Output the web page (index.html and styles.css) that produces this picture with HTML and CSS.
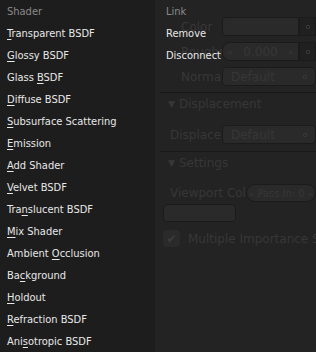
FILE: index.html
```html
<!DOCTYPE html>
<html lang="en">
<head>
    <meta charset="UTF-8">
    <title>Add Shader Menu</title>
    <link rel="stylesheet" href="styles.css">
</head>
<body>
    <div class="panel">
        <div class="node-inputs">
            <div class="prop-row">
                <span class="prop-label">Color</span>
                <div class="field swatch-field"></div>
                <div class="socket-btn"><i></i></div>
            </div>
            <div class="prop-row">
                <span class="prop-label">Roughness</span>
                <div class="field num-field"><span class="arrow">&#9664;</span><span>0.000</span><span class="arrow">&#9654;</span></div>
                <div class="socket-btn"><i></i></div>
            </div>
            <div class="prop-row">
                <span class="prop-label">Normal</span>
                <div class="field text-field"><span>Default</span><i class="dot"></i></div>
            </div>
        </div>

        <div class="section-head"><span class="tri">&#9660;</span> Displacement</div>
        <div class="prop-row indent">
            <span class="prop-label">Displacement</span>
            <div class="field text-field"><span>Default</span><i class="dot"></i></div>
        </div>

        <div class="section-head"><span class="tri">&#9660;</span> Settings</div>
        <div class="prop-row indent wide-label">
            <span class="prop-label">Viewport Color</span>
            <div class="field pill-field"><span class="arrow">&#9664;</span><span>Pass In: 0</span><span class="arrow">&#9654;</span></div>
        </div>
        <div class="field color-swatch"></div>
        <div class="check-row">
            <span class="checkbox">&#10004;</span>
            <span>Multiple Importance Sample</span>
        </div>
    </div>

    <div class="menu">
        <div class="menu-col shader-col">
            <div class="menu-title">Shader</div>
            <div class="menu-item"><u>T</u>ransparent BSDF</div>
            <div class="menu-item"><u>G</u>lossy BSDF</div>
            <div class="menu-item">Glass <u>B</u>SDF</div>
            <div class="menu-item"><u>D</u>iffuse BSDF</div>
            <div class="menu-item"><u>S</u>ubsurface Scattering</div>
            <div class="menu-item"><u>E</u>mission</div>
            <div class="menu-item"><u>A</u>dd Shader</div>
            <div class="menu-item"><u>V</u>elvet BSDF</div>
            <div class="menu-item">Tra<u>n</u>slucent BSDF</div>
            <div class="menu-item"><u>M</u>ix Shader</div>
            <div class="menu-item">Ambient <u>O</u>cclusion</div>
            <div class="menu-item">Ba<u>c</u>kground</div>
            <div class="menu-item"><u>H</u>oldout</div>
            <div class="menu-item"><u>R</u>efraction BSDF</div>
            <div class="menu-item">Ani<u>s</u>otropic BSDF</div>
        </div>
        <div class="menu-col link-col">
            <div class="menu-title">Link</div>
            <div class="menu-item">Remove</div>
            <div class="menu-item">Disconnect</div>
        </div>
    </div>
</body>
</html>
```

FILE: styles.css
```css
:root {
    --menu-bg: #1d1d1d; --panel-bg: #252525; --item-text: #e8e8e8; --title-text: #8a8a8a;
    --dim-text: #3a3a3a; --field-bg: #2c2c2c; --field-border: #1d1d1d; --line: #1b1b1b;
}
* { box-sizing: border-box; }
body {
    margin: 0; width: 316px; height: 352px; overflow: hidden; position: relative;
    background-color: var(--panel-bg);
    font-family: 'DejaVu Sans', 'Liberation Sans', sans-serif; font-size: 11px;
}

/* properties panel underneath the menu */
.panel { margin-left: 160px; padding-top: 17px; color: var(--dim-text); font-size: 12px; white-space: nowrap; overflow: hidden; height: 352px; }
.node-inputs { padding-left: 21px; }
.prop-row { display: flex; align-items: center; height: 19px; margin-bottom: 6px; }
.prop-label { width: 41px; flex: none; overflow: hidden; }
.field { background-color: var(--field-bg); border: 1px solid var(--field-border); border-radius: 4px; height: 100%; }
.prop-row .field { flex: 1; display: flex; align-items: center; overflow: hidden; }
.swatch-field { border-radius: 4px 0 0 4px; }
.socket-btn { width: 17px; height: 100%; flex: none; background-color: #222; border: 1px solid var(--field-border); display: flex; align-items: center; justify-content: center; }
.socket-btn i, .dot { width: 4px; height: 4px; border: 1px solid #3a3a3a; border-radius: 1px; display: block; }
.num-field { justify-content: space-between; padding: 0 4px; border-radius: 8px 0 0 8px; }
.num-field .arrow, .pill-field .arrow { font-size: 6px; color: #333; }
.text-field { justify-content: space-between; padding: 0 8px 0 8px; }
.section-head { border-top: 1px solid var(--line); height: 23px; display: flex; align-items: center; gap: 4px; padding-left: 8px; margin-top: 2px; }
.tri { font-size: 9px; }
.indent { padding-left: 10px; margin-top: 10px; margin-bottom: 7px; }
.indent .prop-label { width: 52px; }
.wide-label .prop-label { width: 76px; }
.wide-label { height: 18px; margin-top: 10px; margin-bottom: 2px; }
.pill-field { border-radius: 9px; justify-content: space-between; padding: 0 2px; font-size: 11px; font-stretch: condensed; }
.color-swatch { width: 73px; height: 18px; margin-left: 3px; }
.check-row { display: flex; align-items: center; gap: 8px; height: 17px; margin-top: 8px; margin-left: 3px; }
.checkbox { width: 17px; height: 17px; flex: none; border-radius: 4px; background-color: #2c2c2c; color: #3f3f3f; display: flex; align-items: center; justify-content: center; }

/* popup menu */
.menu { position: absolute; top: 0; left: 0; width: 316px; height: 352px; display: grid; grid-template-columns: 155px 161px; }
.menu-col { display: flex; flex-direction: column; padding-top: 1px; font-stretch: condensed; }
.shader-col { background-color: var(--menu-bg); padding-left: 7px; }
.link-col { background-color: rgba(0, 0, 0, 0.04); padding-left: 11px; border-bottom-right-radius: 5px; }
.menu-title { height: 22px; line-height: 22px; color: var(--title-text); }
.menu-item { height: 22px; line-height: 22px; color: var(--item-text); white-space: nowrap; }
.menu-item u { text-decoration-thickness: 1px; text-underline-offset: 2px; }
```
